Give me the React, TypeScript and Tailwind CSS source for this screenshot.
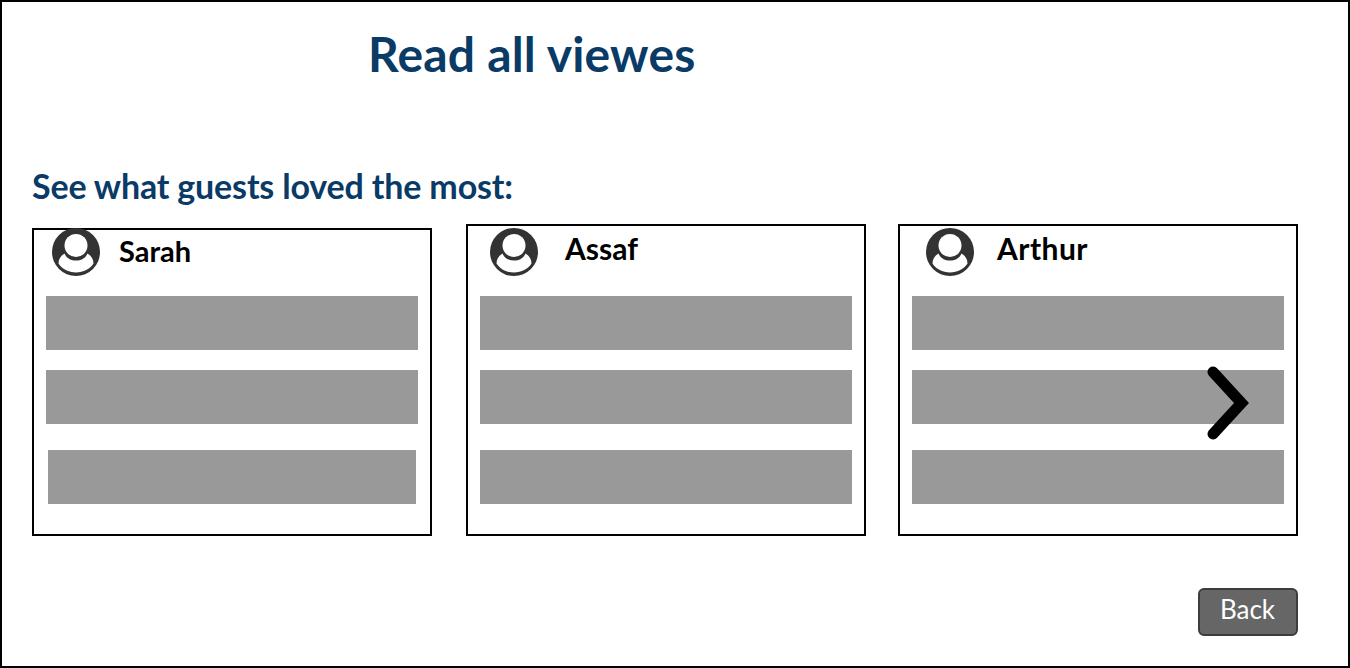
import React from 'react';

const Avatar: React.FC = () => (
  <svg width="48" height="48" viewBox="0 0 48 48" className="block shrink-0">
    <circle cx="24" cy="24" r="24" fill="#333333" />
    <circle cx="24" cy="17.5" r="11.5" fill="#ffffff" />
    <path
      d="M12.5 25.5C14.5 30.5 19 32.5 24 32.5C29 32.5 33.5 30.5 35.5 25.5C39 27.5 41.5 31 41.5 35.5C38 41 31.5 44.5 24 44.5C16.5 44.5 10 41 6.5 35.5C6.5 31 9 27.5 12.5 25.5Z"
      fill="#ffffff"
    />
  </svg>
);

const Bar: React.FC<{ className?: string }> = ({ className = '' }) => (
  <div className={`h-[54px] bg-[#999999] ${className}`} />
);

export default function App() {
  return (
    <div className="relative flex h-[668px] w-[1350px] flex-col border-2 border-black bg-white font-['Lato',sans-serif]">
      <h1 className="mt-[24px] ml-[366px] text-[48px] leading-[56px] font-bold tracking-[0.2px] text-[#0a3a66]">Read all viewes</h1>
      <h2 className="mt-[83px] ml-[30px] text-[34px] leading-[42px] font-bold tracking-[-0.17px] text-[#0a3a66]">See what guests loved the most:</h2>

      <div className="mt-[17px] ml-[30px] flex items-end">
        <div className="h-[308px] w-[400px] border-2 border-black">
          <div className="flex h-[46px] items-center pl-[18px]">
            <div className="-mt-[2px]"><Avatar /></div>
            <span className="mb-[4px] ml-[19px] text-[29px] font-bold text-black">Sarah</span>
          </div>
          <div className="mt-[20px] flex flex-col px-[12px]">
            <Bar />
            <Bar className="mt-[20px]" />
            <Bar className="mx-[2px] mt-[26px]" />
          </div>
        </div>

        <div className="ml-[34px] h-[312px] w-[400px] border-2 border-black">
          <div className="flex h-[50px] items-center pl-[22px]">
            <div className="mt-[2px]"><Avatar /></div>
            <span className="mb-[6px] ml-[27px] text-[30px] font-bold text-black">Assaf</span>
          </div>
          <div className="mt-[20px] flex flex-col px-[12px]">
            <Bar />
            <Bar className="mt-[20px]" />
            <Bar className="mt-[26px]" />
          </div>
        </div>

        <div className="relative ml-[32px] h-[312px] w-[400px] border-2 border-black">
          <div className="flex h-[50px] items-center pl-[26px]">
            <div className="mt-[2px]"><Avatar /></div>
            <span className="mb-[6px] ml-[23px] text-[30px] font-bold tracking-[0.45px] text-black">Arthur</span>
          </div>
          <div className="mt-[20px] flex flex-col px-[12px]">
            <Bar />
            <Bar className="mt-[20px]" />
            <Bar className="mt-[26px]" />
          </div>
          <svg width="46" height="76" viewBox="0 0 46 76" className="absolute top-[139px] left-[306px]">
            <path d="M7 7L35.5 38L7 69" fill="none" stroke="#000000" strokeWidth="11" strokeLinecap="round" strokeLinejoin="miter" />
          </svg>
        </div>
      </div>

      <div className="mt-[52px] flex justify-end pr-[50px]">
        <button className="h-[48px] w-[100px] rounded-[6px] border-2 border-[#3d3d3d] bg-[#666666] pr-[1px] pb-[6px] text-[26px] leading-none text-white">
          Back
        </button>
      </div>
    </div>
  );
}
